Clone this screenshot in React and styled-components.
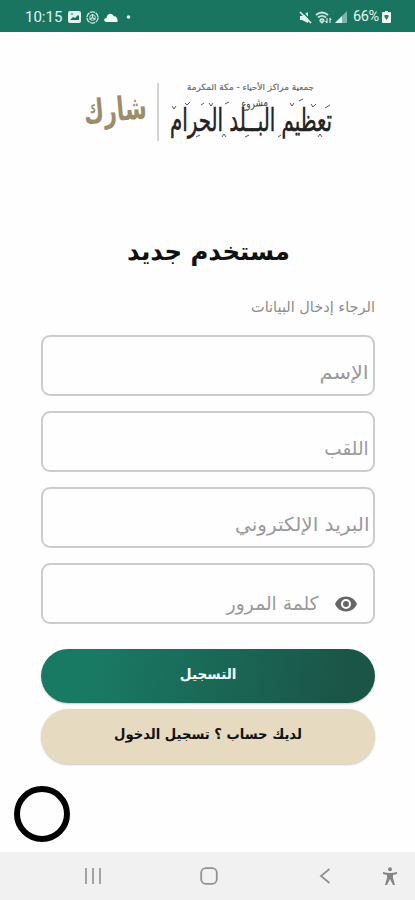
import React from 'react';
import styled, { createGlobalStyle } from 'styled-components';

const Global = createGlobalStyle`
  * { box-sizing: border-box; }
  html, body { margin: 0; padding: 0; background: #fefefe; }
  body { font-family: 'DejaVu Sans', sans-serif; }
  button, input { font: inherit; }
`;

const Screen = styled.div`
  width: 415px;
  height: 900px;
  display: flex;
  flex-direction: column;
  background: #fefefe;
  overflow: hidden;
`;

const StatusBar = styled.header`
  height: 32px;
  flex: none;
  display: flex;
  justify-content: space-between;
  align-items: center;
  padding: 2px 24px 0 25px;
  background: #197560;
  color: #e2f3ed;
  font: 400 14px/20px Roboto, sans-serif;
`;

const StatusGroup = styled.div`
  display: flex;
  align-items: center;
  gap: ${(p) => p.$gap}px;
`;

const Clock = styled.span`
  width: 38px;
  font-size: 15px;
  white-space: nowrap;
`;

const Percent = styled.span`
  margin-left: 3px;
  width: 26px;
  font-size: 14.5px;
  letter-spacing: -0.4px;
`;

const Brand = styled.div`
  height: 194px;
  flex: none;
  padding: 43px 0 0 75px;
`;

const LogoArt = styled.svg`
  display: block;
  overflow: visible;
  font-family: 'DejaVu Sans', sans-serif;
`;

const Main = styled.main`
  flex: 1;
  direction: rtl;
  padding: 0 40px 0 41px;
  display: flex;
  flex-direction: column;
`;

const Fit = styled.span`
  display: inline-block;
  white-space: nowrap;
  transform: scaleX(${(p) => p.$x || 1});
  transform-origin: ${(p) => p.$origin || 'right'} center;
`;

const Title = styled.h1`
  margin: 0;
  height: 64px;
  padding-top: 6px;
  text-align: center;
  font-size: 25px;
  line-height: 40px;
  font-weight: 700;
  color: #111;
`;

const Hint = styled.p`
  margin: 0;
  height: 45px;
  padding-top: 6px;
  font-size: 14.5px;
  line-height: 22px;
  color: #8c8c8c;
`;

const Fields = styled.div`
  display: grid;
  grid-auto-rows: 61px;
  row-gap: 15px;
`;

const Field = styled.label`
  display: flex;
  align-items: center;
  padding: ${(p) => (p.$icon ? '18px 15px 0 0' : '12px 4px 0 0')};
  gap: 16px;
  border: 2px solid #cccccc;
  border-radius: 9px;
  background: #fefefe;
  color: #999;
  font-size: 19px;
  line-height: 28px;
`;

const EyeIcon = styled.svg`
  flex: none;
  margin-top: 3px;
`;

const Actions = styled.div`
  margin-top: 24.5px;
  display: grid;
  row-gap: 6px;
`;

const Button = styled.button`
  height: 54.5px;
  border: 0;
  border-radius: 28px;
  padding: 0 0 4px;
  text-align: center;
  font-size: 14px;
  font-weight: 700;
  color: ${(p) => (p.$primary ? '#f4fffb' : '#111')};
  background: ${(p) => (p.$primary ? 'linear-gradient(100deg, #197a64 15%, #1b5548 90%)' : '#e6dac1')};
  box-shadow: 0 1px 2px rgba(0, 0, 0, 0.22);
`;

const Ring = styled.div`
  flex: none;
  width: 56px;
  height: 56px;
  margin: 0 0 10px 14px;
  border: 6px solid #000;
  border-radius: 50%;
`;

const NavBar = styled.nav`
  height: 48px;
  flex: none;
  background: #f1f1f1;
  display: grid;
  grid-template-columns: 77px 32px 84px 32px 84px 32px 33px 32px 9px;
  align-items: center;
  & > svg { justify-self: center; }
`;

const Gap = styled.span``;

function Word({ right, y, size, width, children, ...rest }) {
  return (
    <text x={right} y={y} fontSize={size} textLength={width} lengthAdjust="spacingAndGlyphs" {...rest}>
      {children}
    </text>
  );
}

function Logo() {
  return (
    <LogoArt width="265" height="75" viewBox="75 75 265 75" direction="rtl">
      <Word right={147} y={121} size={33} width={63} fill="#9b8d6b" fontWeight="700" transform="rotate(-5 115 115)">شارك</Word>
      <path d="M158 83V141" stroke="#c5c5c5" strokeWidth="1.5" />
      <Word right={314} y={89.5} size={8.5} width={127} fill="#666" stroke="#777" strokeWidth="0.2">جمعية مراكز الأحياء - مكة المكرمة</Word>
      <Word right={332} y={131} size={31} width={162} fill="#222" stroke="#222" strokeWidth="0.5">تعظيم البــلد الحرام</Word>
      <Word right={268} y={107} size={12} width={27} fill="#444" transform="rotate(-6 254 104)">مشروع</Word>
      <g fill="none" stroke="#555" strokeWidth="1">
        <path d="M172 106l2 3 2-3M185 103l2 2 3-3M201 105l3-2M209 103l2 3 2-3M225 104l4-2M290 103l2 3 2-3M299 101l4-2M311 104l2 3 3-3M325 108l5-3M171 137l3-2M196 137l4-2M222 137l2-3 2 3M245 137l4-2M318 137l2-3 2 3M278 137l3-2" />
      </g>
    </LogoArt>
  );
}

export default function App() {
  return (
    <Screen>
      <Global />
      <StatusBar>
        <StatusGroup $gap={5}>
          <Clock>10:15</Clock>
          <svg width="13" height="12" viewBox="0 0 13 12"><rect width="13" height="12" rx="2" fill="#e2f3ed" /><path d="M2 9l3-3 2 1 3-3 1 1v4z" fill="#197560" /><path d="M3 3h2" stroke="#197560" /></svg>
          <svg width="13" height="13" viewBox="0 0 13 13" fill="none" stroke="#cfe9e0"><circle cx="6.5" cy="6.5" r="5.6" strokeWidth="1.3" strokeDasharray="5 .8" /><circle cx="6.5" cy="6.5" r="2.8" /><path d="M6.5 3v3.5l3 2M6.5 6.5l-3 2" strokeWidth="1.2" /></svg>
          <svg width="14" height="9" viewBox="0 0 14 9"><path d="M2.5 9C-.7 8.7-.3 5 2.5 5 3 0 8.6-.6 9.7 3.3 13 3 13.8 6 13.5 9z" fill="#effaf6" /></svg>
          <svg width="11" height="4" viewBox="0 0 11 4"><circle cx="5.5" cy="2" r="1.8" fill="#e2f3ed" /></svg>
        </StatusGroup>
        <StatusGroup $gap={3}>
          <svg width="13" height="13" viewBox="0 0 13 13"><path d="M1 5h2l6-4v11L3 9H1z" fill="#e2f3ed" /><path d="M2.5 0l10 10" stroke="#197560" strokeWidth="1.5" /><path d="M1 1l11 11" stroke="#e2f3ed" strokeWidth="1.7" /></svg>
          <svg width="17" height="13" viewBox="0 0 17 13" fill="none" stroke="#cde8df" strokeWidth="1.8"><path d="M1 4Q7-1 13 4M3 6.5q4-3.3 8 0M5 9q2-1.7 4 0" /><path d="M7 12l-2-2h4zM12 7v5M10.5 10l1.5 2M15 12V7l1 2" strokeWidth="1.2" /></svg>
          <svg width="12" height="12" viewBox="0 0 12 12"><path d="M0 12L12 0v12z" fill="#7db6a7" /><path d="M0 12L7 5v7z" fill="#dff1eb" /></svg>
          <Percent>66%</Percent>
          <svg width="9" height="12" viewBox="0 0 9 12"><path d="M3 0h3v1h2q1 0 1 1v9q0 1-1 1H1q-1 0-1-1V2q0-1 1-1h2z" fill="#edf8f4" /><path d="M2.5 4h4v2l-2 3-2-3z" fill="#387b6c" /></svg>
        </StatusGroup>
      </StatusBar>
      <Brand><Logo /></Brand>
      <Main>
        <Title><Fit $x={0.975} $origin="center">مستخدم جديد</Fit></Title>
        <Hint><Fit>الرجاء إدخال البيانات</Fit></Hint>
        <Fields>
          <Field><Fit $x={1.1}>الإسم</Fit></Field>
          <Field><Fit $x={0.97}>اللقب</Fit></Field>
          <Field><Fit $x={1.055}>البريد الإلكتروني</Fit></Field>
          <Field $icon>
            <EyeIcon width="24" height="24" viewBox="0 0 24 24"><path fill="#666" d="M12 4.5C7 4.5 2.7 7.6 1 12c1.7 4.4 6 7.5 11 7.5s9.3-3.1 11-7.5C21.3 7.6 17 4.5 12 4.5zM12 17a5 5 0 1 1 0-10 5 5 0 0 1 0 10zm0-8a3 3 0 1 0 0 6 3 3 0 0 0 0-6z" /></EyeIcon>
            <Fit $x={0.98}>كلمة المرور</Fit>
          </Field>
        </Fields>
        <Actions>
          <Button $primary><Fit $x={0.97} $origin="center">التسجيل</Fit></Button>
          <Button><Fit $x={0.94} $origin="center">لديك حساب ؟ تسجيل الدخول</Fit></Button>
        </Actions>
      </Main>
      <Ring />
      <NavBar>
        <Gap />
        <svg width="18" height="18" viewBox="0 0 18 18" stroke="#a3a3a3" strokeWidth="2"><path d="M2 1v16M9 1v16M16 1v16" /></svg>
        <Gap />
        <svg width="18" height="18" viewBox="0 0 18 18" fill="none" stroke="#929292" strokeWidth="1.8"><rect x="1.2" y="1.2" width="15.6" height="15.6" rx="4.5" /></svg>
        <Gap />
        <svg width="12" height="18" viewBox="0 0 12 18" fill="none" stroke="#929292" strokeWidth="1.8"><path d="M10.5 2L2 9l8.5 7" /></svg>
        <Gap />
        <svg width="16" height="19" viewBox="0 0 16 19" fill="#858585"><circle cx="8" cy="2.2" r="2" /><path d="M1 5q7 2 14 0v2l-4 1v3l2 7h-2l-3-6-3 6H3l2-7V8L1 7z" /></svg>
      </NavBar>
    </Screen>
  );
}
